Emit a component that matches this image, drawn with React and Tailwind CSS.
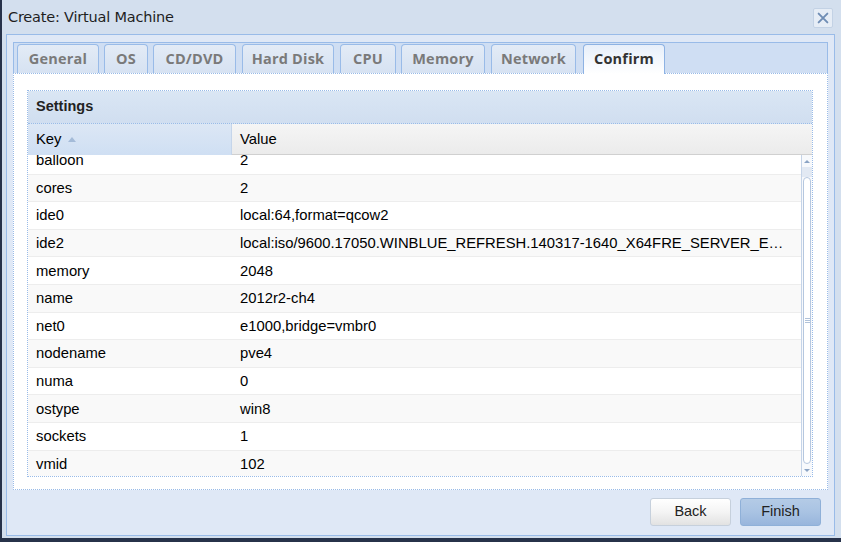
import React from 'react';

const TABS = [
  { label: 'General', w: 82, ml: 'ml-0' },
  { label: 'OS', w: 44, ml: 'ml-[5px]' },
  { label: 'CD/DVD', w: 83, ml: 'ml-[5px]' },
  { label: 'Hard Disk', w: 92, ml: 'ml-[6px]' },
  { label: 'CPU', w: 56, ml: 'ml-[6px]' },
  { label: 'Memory', w: 84, ml: 'ml-[5px]' },
  { label: 'Network', w: 85, ml: 'ml-[6px]' },
  { label: 'Confirm', w: 82, ml: 'ml-[7px]', active: true },
];

const ROWS = [
  ['balloon', '2'],
  ['cores', '2'],
  ['ide0', 'local:64,format=qcow2'],
  ['ide2', 'local:iso/9600.17050.WINBLUE_REFRESH.140317-1640_X64FRE_SERVER_E…'],
  ['memory', '2048'],
  ['name', '2012r2-ch4'],
  ['net0', 'e1000,bridge=vmbr0'],
  ['nodename', 'pve4'],
  ['numa', '0'],
  ['ostype', 'win8'],
  ['sockets', '1'],
  ['vmid', '102'],
];

const CloseIcon = () => (
  <svg viewBox="0 0 16 16" className="w-[14px] h-[14px]">
    <path d="M3 3L13 13M13 3L3 13" stroke="#6f8db5" strokeWidth="2.2" strokeLinecap="round" />
  </svg>
);

// Tab strip with the wizard steps
const TabStrip = () => (
  <div className="h-[31px] flex items-end pl-[3px] bg-[#cfdef3] border border-[#99bbe8] border-b-0">
    {TABS.map((t) => (
      <div
        key={t.label}
        style={{ width: t.w }}
        className={
          t.ml + ' ' +
          (t.active
            ? 'h-[30px] -mb-px flex items-center justify-center rounded-t-[4px] border border-b-0 border-[#8db2e3] bg-gradient-to-b from-[#e7effa] to-white text-[#333] relative z-10'
            : 'h-[29px] flex items-center justify-center rounded-t-[4px] border border-b-0 border-[#99bbe8] bg-gradient-to-b from-[#e3ebf6] to-[#d6e2f2] text-[#7a7a7a]')
        }
      >
        <span className="text-[14.5px] font-bold font-['Open_Sans',sans-serif] leading-none tracking-[0.2px]">{t.label}</span>
      </div>
    ))}
  </div>
);

const Scrollbar = () => (
  <div className="w-[11px] flex flex-col border-l border-[#c5d4e8] bg-[#f7f9fc]">
    <div className="h-[12px] flex items-center justify-center">
      <div className="w-0 h-0 border-l-[3px] border-r-[3px] border-b-[3px] border-l-transparent border-r-transparent border-b-[#8aa3c4]" />
    </div>
    <div className="h-[10px] bg-[#e2e9f3]" />
    <div className="flex-1 mx-px rounded-[5px] border border-[#b5c7df] bg-white flex items-center justify-center">
      <div className="flex flex-col gap-px">
        <div className="w-[5px] h-px bg-[#b0c2da]" />
        <div className="w-[5px] h-px bg-[#b0c2da]" />
        <div className="w-[5px] h-px bg-[#b0c2da]" />
      </div>
    </div>
    <div className="h-[12px] flex items-center justify-center">
      <div className="w-0 h-0 border-l-[3px] border-r-[3px] border-t-[3px] border-l-transparent border-r-transparent border-t-[#8aa3c4]" />
    </div>
  </div>
);

const SettingsGrid = () => (
  <div className="flex-1 flex flex-col border border-dotted border-[#99bbe8] min-h-0">
    <div className="h-[33px] flex items-center pl-[8px] bg-gradient-to-b from-[#dae6f4] to-[#d0def0] border-b border-dotted border-[#99bbe8]">
      <span className="text-[14.5px] font-bold text-[#222] font-['Liberation_Sans',Arial,sans-serif]">Settings</span>
    </div>
    <div className="h-[31px] flex font-['Liberation_Sans',Arial,sans-serif] text-[14.8px] text-black">
      <div className="w-[204px] flex items-center pl-[8px] bg-gradient-to-b from-[#dce7f5] to-[#cfdff3] border-r border-[#c5d5ea]">
        Key
        <span className="ml-[6px] w-0 h-0 border-l-[4px] border-r-[4px] border-b-[5px] border-l-transparent border-r-transparent border-b-[#a4bbd8]" />
      </div>
      <div className="flex-1 flex items-center pl-[8px] bg-gradient-to-b from-[#f5f5f5] to-[#ebebeb] border-b border-[#d0d0d0]">Value</div>
    </div>
    <div className="flex-1 flex min-h-0">
      <div className="flex-1 overflow-hidden min-w-0">
        <div className="-mt-[8px]">
          {ROWS.map(([k, v], i) => (
            <div
              key={k}
              className={
                'h-[27.6px] flex items-center border-b border-[#ededed] font-["Liberation_Sans",Arial,sans-serif] text-[14.8px] text-black ' +
                (i % 2 === 1 ? 'bg-[#f9f9f9]' : 'bg-white')
              }
            >
              <div className="w-[204px] pl-[8px] shrink-0">{k}</div>
              <div className="flex-1 pl-[8px] truncate min-w-0">{v}</div>
            </div>
          ))}
        </div>
      </div>
      <Scrollbar />
    </div>
  </div>
);

const App = () => {
  return (
    <div className="w-[841px] h-[542px] bg-[#27324a] overflow-hidden">
      <div className="ml-[2px] h-[538px] bg-[#d3dfee] flex flex-col">
        {/* title bar */}
        <div className="h-[34px] flex items-center justify-between pl-[6px] pr-[8px] pt-px">
          <span className="text-[14.5px] text-[#1e1e1e] font-['DejaVu_Sans',sans-serif] tracking-[-0.2px]">Create: Virtual Machine</span>
          <div className="w-[20px] h-[20px] flex items-center justify-center rounded-[2px] border border-[#c3d2e5] bg-[#e6edf6]">
            <CloseIcon />
          </div>
        </div>
        {/* window body */}
        <div className="flex-1 ml-[4px] mr-[6px] mb-[2px] border border-[#99bbe8] bg-[#dfe8f6] px-[6px] pt-[7px] flex flex-col">
          <TabStrip />
          <div className="h-[417px] bg-white border border-dotted border-[#99bbe8] pl-[13px] pr-[14px] pt-[16px] pb-[12px] flex flex-col">
            <SettingsGrid />
          </div>
          {/* button bar */}
          <div className="flex-1 flex items-start justify-end gap-[9px] pt-[8px] pr-[7px] font-['Liberation_Sans',Arial,sans-serif] text-[14.5px]">
            <button className="w-[81px] h-[28px] rounded-[3px] border border-[#c6d0dc] bg-gradient-to-b from-white via-[#f4f4f4] to-[#e2e2e2] text-[#222]">
              Back
            </button>
            <button className="w-[81px] h-[28px] rounded-[3px] border border-[#8fb0d8] bg-gradient-to-b from-[#b4cbe6] via-[#a9c3e3] to-[#98b5dc] text-[#222]">
              Finish
            </button>
          </div>
        </div>
      </div>
    </div>
  );
};

export default App;
